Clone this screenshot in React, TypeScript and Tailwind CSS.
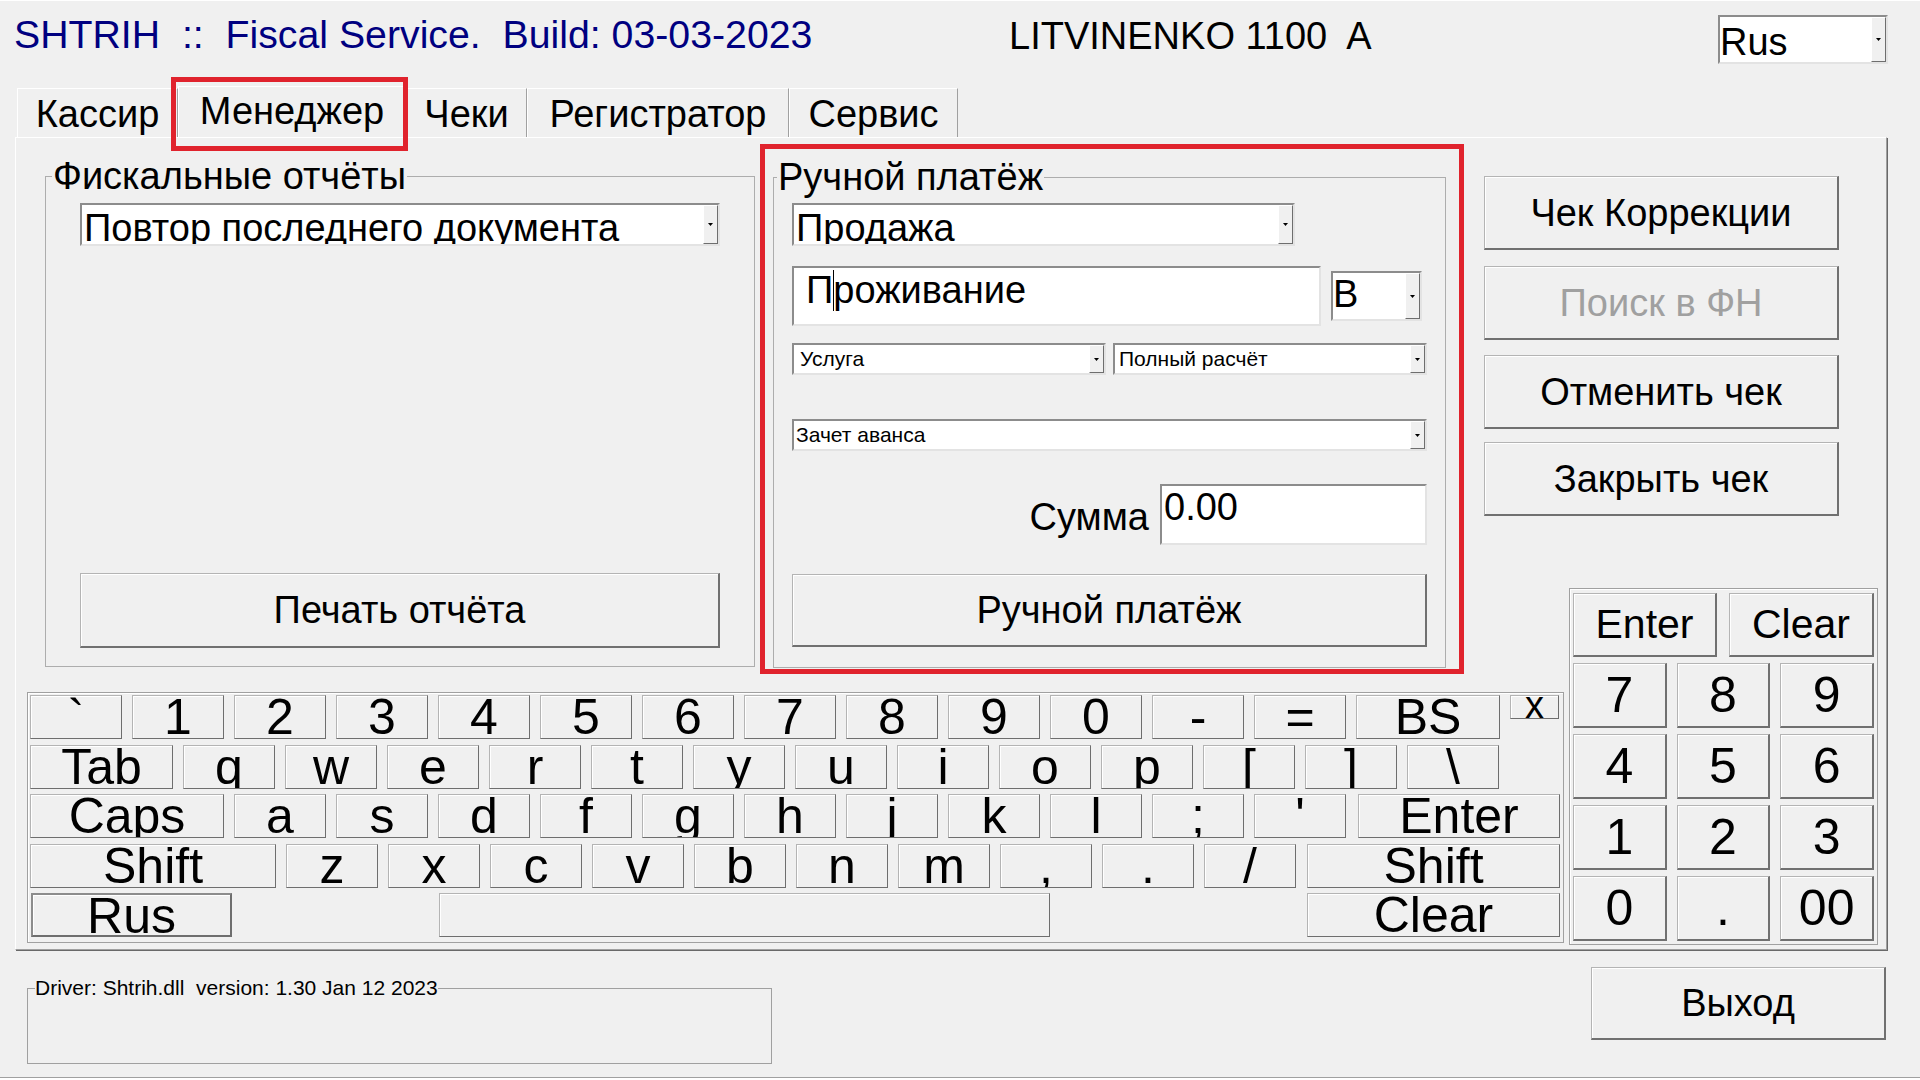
import React from "react";

const FACE = "bg-[#f0f0f0]";

function Arrow() {
  return (
    <svg width="5" height="3" viewBox="0 0 5 3">
      <path d="M0 0h5L2.5 3z" fill="#000" />
    </svg>
  );
}

function DropBtn() {
  return (
    <div className="w-[15px] h-full shrink-0 flex items-center justify-center bg-[#f0f0f0] border border-white border-r-[#6e6e6e] border-b-[#6e6e6e]">
      <Arrow />
    </div>
  );
}

interface ComboProps {
  text: string;
  box: string;
  pad: string;
}

function Combo({ text, box, pad }: ComboProps) {
  return (
    <div
      className={`flex bg-white border-2 border-[#8c8c8c] border-r-[#e3e3e3] border-b-[#e3e3e3] ${box}`}
    >
      <div className={`flex-1 min-w-0 overflow-hidden whitespace-nowrap text-black ${pad}`}>
        {text}
      </div>
      <DropBtn />
    </div>
  );
}

function Btn({
  children,
  className = "",
  disabled = false,
}: {
  children: React.ReactNode;
  className?: string;
  disabled?: boolean;
}) {
  return (
    <div
      className={`flex items-center justify-center ${FACE} border border-[#b4b4b4] border-r-2 border-b-2 border-r-[#707070] border-b-[#707070] shadow-[inset_1px_1px_0_#ffffff] whitespace-nowrap ${
        disabled ? "text-[#a0a0a0]" : "text-black"
      } ${className}`}
    >
      {children}
    </div>
  );
}

function Key({ label, w, className = "" }: { label: string; w: string; className?: string }) {
  return (
    <div
      className={`h-full shrink-0 overflow-hidden text-center text-[50px] leading-[42px] ${FACE} border border-[#b4b4b4] border-r-[#6e6e6e] border-b-[#6e6e6e] shadow-[inset_1px_1px_0_#ffffff] ${w} ${className}`}
    >
      {label}
    </div>
  );
}

const row1 = ["`", "1", "2", "3", "4", "5", "6", "7", "8", "9", "0", "-", "="];
const row2 = ["q", "w", "e", "r", "t", "y", "u", "i", "o", "p", "[", "]", "\\"];
const row3 = ["a", "s", "d", "f", "g", "h", "j", "k", "l", ";", "'"];
const row4 = ["z", "x", "c", "v", "b", "n", "m", ",", ".", "/"];
const pad = ["7", "8", "9", "4", "5", "6", "1", "2", "3", "0", ".", "00"];

function Tab({ w, children }: { w: string; children: React.ReactNode }) {
  return (
    <div
      className={`h-[49px] ${w} shrink-0 text-center text-[38px] leading-[38px] pt-[6px] border-t border-l border-white border-r border-r-[#a0a0a0]`}
    >
      {children}
    </div>
  );
}

export default function App() {
  return (
    <div className="w-[1920px] h-[1080px] bg-[#f0f0f0] flex flex-col overflow-hidden text-black [font-family:'Liberation_Sans',Arial,sans-serif]">
      {/* header */}
      <div className="flex h-[88px] shrink-0 items-start border-t border-white">
        <div className="ml-[14px] mt-[14px] w-[995px] text-[39.25px] leading-[39px] text-[#000080] whitespace-pre">
          SHTRIH  ::  Fiscal Service.  Build: 03-03-2023
        </div>
        <div className="mt-[16px] text-[38px] leading-[38px] whitespace-pre">LITVINENKO 1100  A</div>
        <Combo
          text="Rus"
          box="ml-auto mr-[32px] mt-[14px] w-[170px] h-[49px]"
          pad="text-[38px] leading-[38px] pt-[6px] pl-0"
        />
      </div>

      {/* tabs */}
      <div className="flex h-[49px] shrink-0 items-end pl-[17px]">
        <Tab w="w-[161px]">Кассир</Tab>
        <div className="relative z-10 h-[51px] w-[228px] shrink-0 text-center text-[38px] leading-[38px] pt-[5px] bg-[#f0f0f0] border-t border-l border-white border-r border-r-[#a0a0a0]">
          Менеджер
          <div className="absolute left-[-8px] right-[-3px] top-[-10px] bottom-[-14px] border-[5px] border-[#e0232d]" />
        </div>
        <Tab w="w-[121px]">Чеки</Tab>
        <Tab w="w-[262px]">Регистратор</Tab>
        <Tab w="w-[169px]">Сервис</Tab>
      </div>

      {/* tab page */}
      <div className="ml-[15px] w-[1872px] h-[813px] shrink-0 grid grid-cols-[1454px_96px_320px] grid-rows-[448px_98px_265px] border border-white border-r-[#a0a0a0] border-b-[#a0a0a0] shadow-[1px_1px_0_#696969]">
        {/* groups */}
        <div className="col-start-1 row-start-1 row-span-2 flex items-start pl-[29px] pt-[6px]">
          <fieldset className="w-[710px] mt-[13px] border border-[#adadad]">
            <legend className="ml-[6px] px-[1px] text-[38px] leading-[38px]">Фискальные отчёты</legend>
            <div className="px-[34px] pb-[18px]">
              <Combo
                text="Повтор последнего документа"
                box="mt-[8px] w-full h-[43px]"
                pad="text-[38px] leading-[38px] pt-[4px] pl-[2px]"
              />
              <Btn className="mt-[327px] w-full h-[75px] text-[38px] leading-none">Печать отчёта</Btn>
            </div>
          </fieldset>

          <div className="ml-[5px] w-[704px] border-[5px] border-[#e0232d] pl-[8px] pt-[9px] pb-[1px]">
            <fieldset className="w-[673px] border border-[#adadad]">
              <legend className="ml-[3px] px-[1px] text-[38px] leading-[38px]">Ручной платёж</legend>
              <div className="px-[18px] pb-[20px] flex flex-col">
                <Combo
                  text="Продажа"
                  box="mt-[7px] w-[503px] h-[43px]"
                  pad="text-[38px] leading-[38px] pt-[4px] pl-[2px]"
                />
                <div className="mt-[20px] flex items-start">
                  <div className="w-[529px] h-[60px] bg-white border-2 border-[#8c8c8c] border-r-[#e3e3e3] border-b-[#e3e3e3] text-[38px] leading-[38px] pt-[2px] pl-[12px] whitespace-nowrap overflow-hidden">
                    П
                    <span className="inline-block w-px h-[41px] -mr-px bg-black align-[-8px]" />
                    роживание
                  </div>
                  <Combo
                    text="В"
                    box="ml-[10px] mt-[5px] w-[91px] h-[50px]"
                    pad="text-[38px] leading-[38px] pt-[2px] pl-0"
                  />
                </div>
                <div className="mt-[17px] flex gap-[7px]">
                  <Combo text="Услуга" box="w-[314px] h-[32px]" pad="text-[21px] leading-[28px] pl-[6px]" />
                  <Combo text="Полный расчёт" box="w-[314px] h-[32px]" pad="text-[21px] leading-[28px] pl-[4px]" />
                </div>
                <Combo text="Зачет аванса" box="mt-[44px] w-[635px] h-[32px]" pad="text-[21px] leading-[28px] pl-[2px]" />
                <div className="mt-[33px] flex justify-end items-start">
                  <div className="mt-[14px] mr-[11px] text-[38px] leading-[38px]">Сумма</div>
                  <div className="w-[267px] h-[61px] bg-white border-2 border-[#8c8c8c] border-r-[#e3e3e3] border-b-[#e3e3e3] text-[38px] leading-[38px] pt-[2px] pl-[2px]">
                    0.00
                  </div>
                </div>
                <Btn className="mt-[29px] w-full h-[73px] text-[38px] leading-none">Ручной платёж</Btn>
              </div>
            </fieldset>
          </div>
        </div>

        {/* right buttons */}
        <div className="col-start-2 col-span-2 row-start-1 flex flex-col pl-[14px] pt-[38px]">
          <Btn className="w-[355px] h-[74px] text-[38px] leading-none">Чек Коррекции</Btn>
          <Btn className="mt-[16px] w-[355px] h-[74px] text-[38px] leading-none" disabled>
            Поиск в ФН
          </Btn>
          <Btn className="mt-[15px] w-[355px] h-[74px] text-[38px] leading-none">Отменить чек</Btn>
          <Btn className="mt-[13px] w-[355px] h-[74px] text-[38px] leading-none">Закрыть чек</Btn>
        </div>

        {/* numpad */}
        <div className="col-start-3 row-start-2 row-span-2 pl-[3px] pt-[2px]">
          <div className="w-[309px] h-[357px] border border-[#a0a0a0] shadow-[inset_1px_1px_0_#ffffff] px-[3px] pt-[4px]">
            <div className="flex h-[64px]">
              <Btn className="w-[144px] h-full text-[41px] leading-none">Enter</Btn>
              <Btn className="ml-[12px] w-[145px] h-full text-[41px] leading-none">Clear</Btn>
            </div>
            <div className="mt-[6px] grid grid-cols-3 gap-x-[10px] gap-y-[6px]">
              {pad.map((d) => (
                <Btn key={d} className="h-[65px] text-[50px] leading-none">
                  {d}
                </Btn>
              ))}
            </div>
          </div>
        </div>

        {/* keyboard */}
        <div className="col-start-1 col-span-2 row-start-3 pl-[11px] pt-[8px]">
          <div className="w-[1537px] h-[251px] border border-[#a0a0a0] shadow-[inset_1px_1px_0_#ffffff] p-[2px] flex flex-col gap-[5.5px]">
            <div className="flex h-[44px] gap-[10px] items-start">
              {row1.map((k) => (
                <Key key={k} label={k} w="w-[92px]" />
              ))}
              <Key label="BS" w="w-[144px]" />
              <div className="w-[49px] h-[24px] shrink-0 overflow-hidden text-center text-[38px] leading-[18px] bg-[#f0f0f0] border border-[#b4b4b4] border-r-[#6e6e6e] border-b-[#6e6e6e] shadow-[inset_1px_1px_0_#ffffff]">
                x
              </div>
            </div>
            <div className="flex h-[44px] gap-[10px]">
              <Key label="Tab" w="w-[143px]" />
              {row2.map((k) => (
                <Key key={k} label={k} w="w-[92px]" />
              ))}
            </div>
            <div className="flex h-[44px] gap-[10px]">
              <Key label="Caps" w="w-[194px]" />
              {row3.map((k) => (
                <Key key={k} label={k} w="w-[92px]" />
              ))}
              <Key label="Enter" w="w-[202px]" className="ml-[2px] border-[#6e6e6e]" />
            </div>
            <div className="flex h-[44px] gap-[10px]">
              <Key label="Shift" w="w-[246px]" />
              {row4.map((k) => (
                <Key key={k} label={k} w="w-[92px]" />
              ))}
              <Key label="Shift" w="w-[253px]" className="ml-[1px]" />
            </div>
            <div className="flex h-[44px]">
              <Key label="Rus" w="w-[201px]" className="ml-[1px] border-2 border-[#6e6e6e] border-t-[#8c8c8c] border-l-[#8c8c8c] leading-[40px]" />
              <Key label="" w="w-[611px]" className="ml-[207px]" />
              <Key label="Clear" w="w-[253px]" className="ml-[257px]" />
            </div>
          </div>
        </div>
      </div>

      {/* bottom */}
      <div className="flex h-[127px] shrink-0 items-start justify-between">
        <fieldset className="ml-[27px] mt-[28px] w-[745px] border border-[#a0a0a0]">
          <legend className="ml-[7px] text-[21px] leading-[20px] whitespace-pre">
            Driver: Shtrih.dll  version: 1.30 Jan 12 2023
          </legend>
          <div className="h-[65px]" />
        </fieldset>
        <Btn className="mt-[17px] mr-[34px] w-[295px] h-[73px] text-[38px] leading-none">Выход</Btn>
      </div>
      <div className="h-[3px] border-t border-[#a0a0a0] bg-white" />
    </div>
  );
}
